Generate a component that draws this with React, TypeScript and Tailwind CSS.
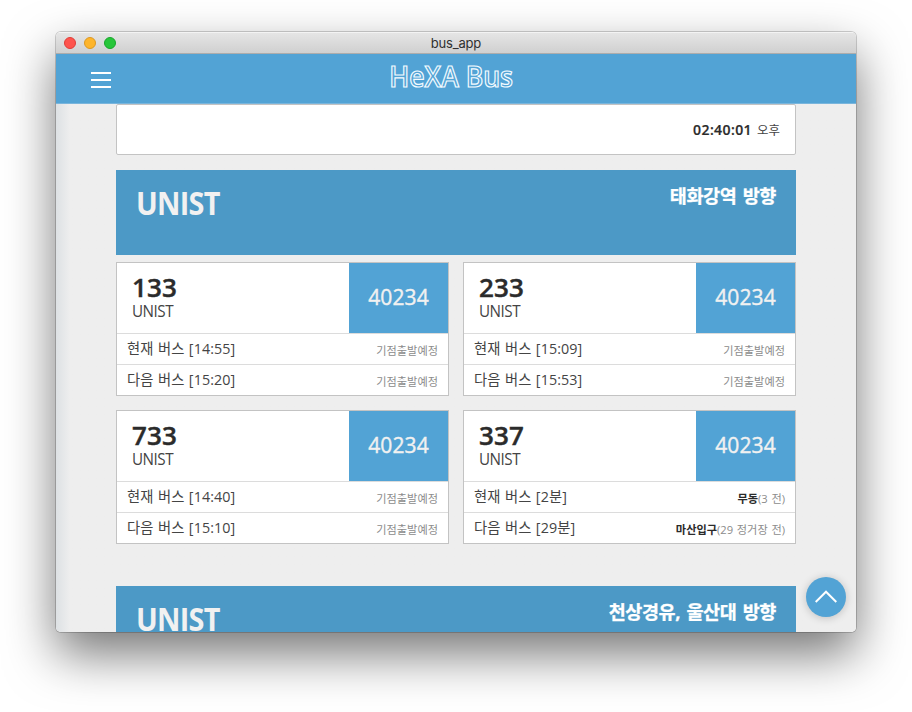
import type { ReactNode } from "react";

type Arrival = { label: string; time: string; stop?: string; note: string };
type Bus = { number: string; arrivals: Arrival[] };

const waiting = "기점출발예정";

const rows: Bus[][] = [
  [
    { number: "133", arrivals: [
      { label: "현재 버스", time: "[14:55]", note: waiting },
      { label: "다음 버스", time: "[15:20]", note: waiting },
    ] },
    { number: "233", arrivals: [
      { label: "현재 버스", time: "[15:09]", note: waiting },
      { label: "다음 버스", time: "[15:53]", note: waiting },
    ] },
  ],
  [
    { number: "733", arrivals: [
      { label: "현재 버스", time: "[14:40]", note: waiting },
      { label: "다음 버스", time: "[15:10]", note: waiting },
    ] },
    { number: "337", arrivals: [
      { label: "현재 버스", time: "[2분]", stop: "무동", note: "(3 전)" },
      { label: "다음 버스", time: "[29분]", stop: "마산입구", note: "(29 정거장 전)" },
    ] },
  ],
];

function TitleBar() {
  return (
    <div className="relative flex h-[22px] shrink-0 items-center border-t border-b border-t-[#f3f3f3] border-b-[#acacac] bg-linear-to-b from-[#e5e5e5] to-[#d0d0d0] pl-2">
      <div className="flex gap-2">
        <span className="size-3 rounded-full border border-[#df3d37] bg-[#fe544d]" />
        <span className="size-3 rounded-full border border-[#dc9822] bg-[#feb52b]" />
        <span className="size-3 rounded-full border border-[#18a62b] bg-[#27c63a]" />
      </div>
      <span className="absolute inset-x-0 top-px text-center font-['Inter',sans-serif] text-[13px] leading-[18px] tracking-[-0.2px] text-[#303030]">bus_app</span>
    </div>
  );
}

function Header() {
  return (
    <header className="flex h-[50px] shrink-0 items-center border-b border-[#79b5dc] bg-[#52a3d5]">
      <button className="ml-[35px] mt-[3px] flex w-5 flex-col gap-[5px]" aria-label="메뉴">
        <span className="h-0.5 bg-white" />
        <span className="h-0.5 bg-white" />
        <span className="h-0.5 bg-white" />
      </button>
      <h1 className="mr-[65px] -mt-1.5 flex-1 text-center text-[28px] leading-[40px] font-semibold tracking-[0px] text-[#52a3d5] [-webkit-text-stroke:1.2px_#f4fbff]">
        <span className="inline-block scale-x-95">HeXA Bus</span>
      </h1>
    </header>
  );
}

function Banner({ children }: { children: ReactNode }) {
  return (
    <section className="flex h-[85px] shrink-0 justify-between bg-[#4c99c6] pr-5 pl-5">
      <h2 className="mt-[11px] h-[44px] origin-left scale-x-90 text-[32px] leading-[44px] font-bold tracking-[-0.8px] text-[#f1f1f1]">UNIST</h2>
      <p className="mt-[12px] text-[18.5px] leading-[28px] font-bold tracking-[-0.4px] [word-spacing:2px] text-white [-webkit-text-stroke:0.3px_white]">{children}</p>
    </section>
  );
}

function BusCard({ bus }: { bus: Bus }) {
  return (
    <article className="flex h-[134px] w-[333px] flex-col border border-[#c3c3c3] bg-white">
      <div className="flex h-[70px] justify-between">
        <div className="pl-[15px]">
          <div className="mt-[11px] h-[28px] text-[26px] leading-[27px] font-semibold tracking-[0.1px] text-[#2b2b2b] [-webkit-text-stroke:0.4px_#2b2b2b]">{bus.number}</div>
          <div className="h-[20px] origin-left scale-x-95 text-[16px] leading-[18px] tracking-[-0.5px] text-[#444]">UNIST</div>
        </div>
        <div className="flex w-[99px] items-center justify-center bg-[#52a3d5] pb-px text-[21px] tracking-[0.1px] text-[#f1f1f1] [-webkit-text-stroke:0.4px_#f1f1f1]">40234</div>
      </div>
      {bus.arrivals.map((a) => (
        <div key={a.label} className="flex h-[31px] items-center justify-between border-t border-[#dcdcdc] pr-[10px] pl-[10px]">
          <span className="text-[14.3px] leading-5 tracking-[0.1px] [word-spacing:0.6px] text-[#444]">{a.label} {a.time}</span>
          <span className="mt-[3px] text-[11.2px] leading-4 [word-spacing:0.8px] text-[#8c8c8c]">
            {a.stop && <b className="text-[#2b2b2b]">{a.stop}</b>}
            {a.note}
          </span>
        </div>
      ))}
    </article>
  );
}

export default function App() {
  return (
    <div className="h-[712px] w-[912px] overflow-hidden bg-white px-14 pt-8 font-['Open_Sans','Noto_Sans_CJK_KR',sans-serif]">
      <main className="relative flex h-[600px] w-[800px] flex-col rounded-[5px] shadow-[0_0_0_1px_rgba(0,0,0,0.18),0_22px_50px_rgba(0,0,0,0.54)]">
        <div className="flex h-full flex-col overflow-hidden rounded-[5px] bg-[#eee]">
          <TitleBar />
          <Header />
          <div className="flex min-h-0 flex-1 flex-col overflow-hidden bg-linear-to-r from-[#dde1e4] to-[#eee] to-[14px] px-[60px]">
            <div className="flex h-[51px] shrink-0 items-center justify-end rounded-xs border border-[#c3c3c3] bg-white pr-[15px] text-[#2b2b2b]">
              <b className="mr-[5px] text-[14px] font-semibold tracking-[0.4px] [-webkit-text-stroke:0.2px_#2b2b2b]">02:40:01</b>
              <span className="mt-[3px] text-[12.5px] text-[#444]">오후</span>
            </div>
            <div className="h-[15px] shrink-0" />
            <Banner>태화강역 방향</Banner>
            <div className="mt-[7px] mb-[42px] flex shrink-0 flex-col gap-[14px]">
              {rows.map((row) => (
                <div key={row[0].number} className="flex justify-between">
                  {row.map((bus) => <BusCard key={bus.number} bus={bus} />)}
                </div>
              ))}
            </div>
            <Banner>천상경유, 울산대 방향</Banner>
          </div>
        </div>
        <button aria-label="맨 위로" className="absolute right-[10px] bottom-[15px] flex size-10 items-center justify-center rounded-full bg-[#52a3d5] shadow-[0_1px_8px_rgba(0,0,0,0.2)]">
          <svg width="22" height="13" viewBox="0 0 22 13" className="-mt-0.5" fill="none" stroke="white" strokeWidth="2">
            <path d="M0.7 12 L11 1.7 L21.3 12" />
          </svg>
        </button>
      </main>
    </div>
  );
}
